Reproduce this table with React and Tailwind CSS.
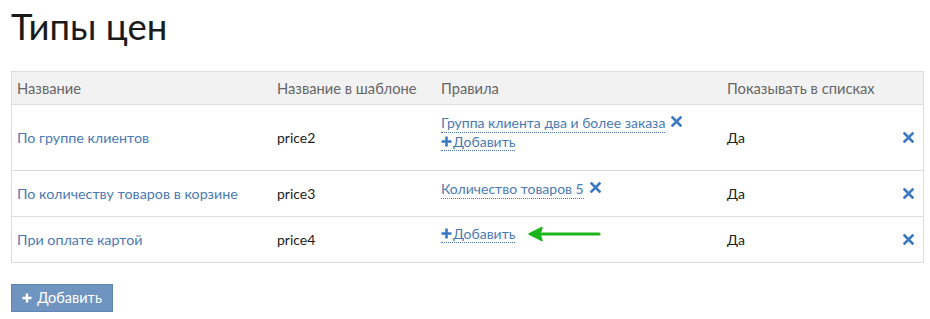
import React from 'react';

const rows = [
  {
    name: 'По группе клиентов',
    tpl: 'price2',
    rules: ['Группа клиента два и более заказа'],
    show: 'Да',
    h: 'h-[65px]',
  },
  {
    name: 'По количеству товаров в корзине',
    tpl: 'price3',
    rules: ['Количество товаров 5'],
    show: 'Да',
    h: 'h-[46px]',
    noAdd: true,
  },
  {
    name: 'При оплате картой',
    tpl: 'price4',
    rules: [],
    show: 'Да',
    h: 'h-[46px]',
    arrow: true,
  },
];

function XIcon({ className }) {
  return (
    <svg width="11" height="11" viewBox="0 0 11 11" className={className}>
      <path d="M1.5 1.5 L9.5 9.5 M9.5 1.5 L1.5 9.5" stroke="#3b78c2" strokeWidth="2.6" strokeLinecap="square" />
    </svg>
  );
}

function Plus({ color = '#3b78c2', size = 11 }) {
  return (
    <svg width={size} height={size} viewBox="0 0 11 11">
      <path d="M5.5 0.5 V10.5 M0.5 5.5 H10.5" stroke={color} strokeWidth="2.6" />
    </svg>
  );
}

function GreenArrow() {
  return (
    <svg width="74" height="16" viewBox="0 0 74 16" className="ml-[13px] -mt-[1px]">
      <path d="M14 8 H71" stroke="#1cb51c" strokeWidth="3.2" strokeLinecap="round" />
      <path d="M1 8 L14 1.5 L12 8 L14 14.5 Z" fill="#1cb51c" stroke="#1cb51c" strokeWidth="1.5" strokeLinejoin="round" />
    </svg>
  );
}

export default function App() {
  return (
    <div className="w-[930px] h-[319px] bg-white pl-[11px] pr-[6px] text-[14px] text-[#222]" style={{ fontFamily: 'Lato, "Open Sans", sans-serif' }}>
      <h1 className="text-[36.5px] leading-[44px] font-normal text-[#1a1a1a] pt-[4px] h-[71px]">Типы цен</h1>

      {/* Table */}
      <div className="border border-[#dcdcdc]">
        <div className="grid grid-cols-[259px_164px_286px_1fr_36px] h-[33px] items-center bg-[#f2f2f2] text-[#666] text-[14.7px] border-b border-[#dcdcdc]">
          <div className="pl-[5px]">Название</div>
          <div className="pl-[6px]">Название в шаблоне</div>
          <div className="pl-[6px]">Правила</div>
          <div className="pl-[6px]">Показывать в списках</div>
          <div></div>
        </div>

        {rows.map((r, i) => (
          <div
            key={r.tpl}
            className={`grid grid-cols-[259px_164px_286px_1fr_36px] ${r.h} ${i > 0 ? 'border-t border-[#dcdcdc]' : ''}`}
          >
            <div className="pl-[5px] flex items-center text-[#4a7ab4] text-[14.3px]">{r.name}</div>
            <div className="pl-[6px] flex items-center">{r.tpl}</div>
            <div className="pl-[6px] pt-[8px] flex flex-col items-start">
              {r.rules.map(rule => (
                <div key={rule} className="flex items-center leading-[19px]">
                  <span className="text-[#4a7ab4] border-b border-dotted border-[#4a7ab4]">{rule}</span>
                  <XIcon className="ml-[6px] -mt-[3px]" />
                </div>
              ))}
              {!r.noAdd && (
                <div className="flex items-center">
                  <span className="flex items-center gap-[1px] text-[#4a7ab4] border-b border-dotted border-[#4a7ab4] leading-[17px]">
                    <Plus />
                    Добавить
                  </span>
                  {r.arrow && <GreenArrow />}
                </div>
              )}
            </div>
            <div className="pl-[6px] flex items-center">{r.show}</div>
            <div className="flex items-center justify-end pr-[9px]">
              <XIcon />
            </div>
          </div>
        ))}
      </div>

      <button className="mt-[21px] h-[28px] w-[102px] flex items-center justify-center gap-[5px] bg-[#6f94c0] border border-[#5f86b4] text-white text-[14.5px]">
        <Plus color="#ffffff" size={10} />
        Добавить
      </button>
    </div>
  );
}
